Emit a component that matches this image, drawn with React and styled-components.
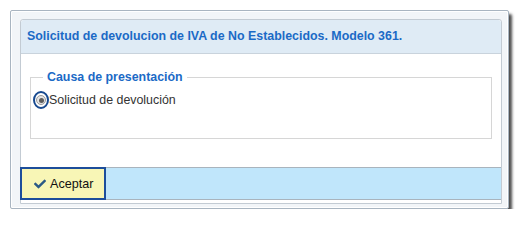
import React from 'react';
import styled, { createGlobalStyle } from 'styled-components';
import { FaCheck } from 'react-icons/fa';

const GlobalStyle = createGlobalStyle`
  body {
    margin: 0;
    background: #ffffff;
    font-family: "Liberation Sans", Arial, sans-serif;
  }
`;

const Page = styled.div`
  padding: 10px 0 0 10px;
`;

const Window = styled.div`
  box-sizing: border-box;
  width: 499px;
  height: 199px;
  padding: 8px 6px 4px 9px;
  background: #f2f5f8;
  border: 1px solid #a9b5c1;
  border-radius: 2px;
  box-shadow: inset 0 0 0 1px #ffffff, 3px 4px 3px rgba(0, 0, 0, 0.7);
`;

const Panel = styled.div`
  box-sizing: border-box;
  height: 100%;
  display: flex;
  flex-direction: column;
  background: #ffffff;
  border: 1px solid #c3cbd3;
  border-radius: 3px 3px 0 0;
`;

const Header = styled.div`
  height: 33px;
  line-height: 33px;
  padding-left: 6px;
  background: #dfebf5;
  border-bottom: 1px solid #c9d3dc;
  border-radius: 3px 3px 0 0;
  color: #1b6ac6;
  font-size: 12.4px;
  font-weight: bold;
`;

const Body = styled.div`
  flex: 1;
  padding: 16px 9px 0 9px;
`;

const Fieldset = styled.fieldset`
  margin: 0;
  padding: 6px 8px 29px 2px;
  border: 1px solid #d6d6d6;
`;

const Legend = styled.legend`
  margin-left: 10px;
  padding: 0 4px;
  line-height: 15px;
  color: #1b6ac6;
  font-size: 12.4px;
  font-weight: bold;
`;

const RadioRow = styled.label`
  display: flex;
  align-items: center;
  height: 18px;
  color: #333333;
  font-size: 12.4px;
`;

const RadioRing = styled.span`
  box-sizing: border-box;
  width: 16px;
  height: 18px;
  display: flex;
  align-items: center;
  justify-content: center;
  border: 2.5px solid #17498f;
  border-radius: 50%;
`;

const RadioDot = styled.span`
  box-sizing: border-box;
  width: 10px;
  height: 10px;
  display: flex;
  align-items: center;
  justify-content: center;
  border: 1px solid #9b9b9b;
  border-radius: 50%;
  background: #e4e4e4;

  &::after {
    content: '';
    width: 5px;
    height: 5px;
    border-radius: 50%;
    background: ${props => props.checked ? '#5d5d5d' : 'transparent'};
  }
`;

const Footer = styled.div`
  box-sizing: border-box;
  height: 33px;
  margin-top: auto;
  margin-bottom: 3px;
  display: flex;
  align-items: flex-start;
  background: #c0e6fb;
  border-top: 1px solid #a9b4bd;
  border-bottom: 1px solid #a9b4bd;
`;

const Button = styled.button`
  box-sizing: border-box;
  width: 86px;
  height: 33px;
  margin: -1px 0 0 -1px;
  padding: 0 0 0 12px;
  display: flex;
  align-items: center;
  gap: 4px;
  background: #f8f6b6;
  border: 2px solid #1d4e9b;
  color: #111111;
  font-family: "Liberation Sans", Arial, sans-serif;
  font-size: 12.6px;
  cursor: pointer;

  svg {
    color: #2b5a85;
  }
`;

export default function App() {
  return (
    <>
      <GlobalStyle />
      <Page>
        <Window>
          <Panel>
            <Header>Solicitud de devolucion de IVA de No Establecidos. Modelo 361.</Header>
            <Body>
              <Fieldset>
                <Legend>Causa de presentación</Legend>
                <RadioRow>
                  <RadioRing>
                    <RadioDot checked />
                  </RadioRing>
                  Solicitud de devolución
                </RadioRow>
              </Fieldset>
            </Body>
            <Footer>
              <Button>
                <FaCheck size={12} />
                Aceptar
              </Button>
            </Footer>
          </Panel>
        </Window>
      </Page>
    </>
  );
}
